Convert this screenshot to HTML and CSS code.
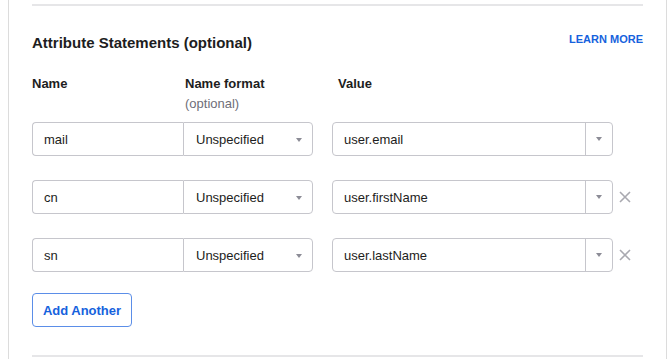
FILE: index.html
```html
<!DOCTYPE html>
<html lang="en">
<head>
  <meta charset="UTF-8" />
  <title>Attribute Statements</title>
  <meta name="viewport" content="width=device-width, initial-scale=1.0" />
  <link rel="stylesheet" href="styles.css">
</head>
<body>
  <div class="panel">
    <div class="divider"></div>

    <!-- Section header -->
    <div class="section-head">
      <h2>Attribute Statements (optional)</h2>
      <a class="learn-more" href="#">LEARN MORE</a>
    </div>

    <!-- Column labels -->
    <div class="row labels">
      <div class="col-name">Name</div>
      <div class="col-format">Name format<span class="hint">(optional)</span></div>
      <div class="col-value">Value</div>
    </div>

    <!-- Attribute rows -->
    <div class="rows">
      <div class="row">
        <div class="pair">
          <input class="name-input" type="text" value="mail" />
          <div class="select">Unspecified<span class="caret"></span></div>
        </div>
        <div class="combo">
          <span class="combo-text">user.email</span>
          <span class="combo-btn"><span class="caret"></span></span>
        </div>
      </div>

      <div class="row">
        <div class="pair">
          <input class="name-input" type="text" value="cn" />
          <div class="select">Unspecified<span class="caret"></span></div>
        </div>
        <div class="combo">
          <span class="combo-text">user.firstName</span>
          <span class="combo-btn"><span class="caret"></span></span>
        </div>
        <button class="remove" title="Remove">
          <svg width="12" height="12" viewBox="0 0 12 12"><path d="M1 1L11 11M11 1L1 11" stroke="#a9a9b0" stroke-width="1.6" fill="none"/></svg>
        </button>
      </div>

      <div class="row">
        <div class="pair">
          <input class="name-input" type="text" value="sn" />
          <div class="select">Unspecified<span class="caret"></span></div>
        </div>
        <div class="combo">
          <span class="combo-text">user.lastName</span>
          <span class="combo-btn"><span class="caret"></span></span>
        </div>
        <button class="remove" title="Remove">
          <svg width="12" height="12" viewBox="0 0 12 12"><path d="M1 1L11 11M11 1L1 11" stroke="#a9a9b0" stroke-width="1.6" fill="none"/></svg>
        </button>
      </div>
    </div>

    <button class="btn-add">Add Another</button>

    <div class="divider bottom"></div>
  </div>
</body>
</html>
```

FILE: styles.css
```css
* {
  box-sizing: border-box;
}

body {
  margin: 0;
  font-family: 'Liberation Sans', Arial, sans-serif;
  color: #1d1d21;
  background: #fff;
}

.panel {
  margin-left: 8px;
  width: 659px;
  height: 359px;
  border-left: 1px solid #dcdcdc;
  border-right: 1px solid #dcdcdc;
  padding: 4px 23px 0;
  overflow: hidden;
}

.divider {
  height: 2px;
  background: #e6e6e8;
}

.divider.bottom {
  margin-top: 28px;
}

.section-head {
  display: flex;
  justify-content: space-between;
  align-items: flex-start;
  margin-top: 27px;
}

h2 {
  margin: 0;
  font-size: 15px;
  line-height: 20px;
  font-weight: bold;
}

.learn-more {
  margin-top: -1px;
  font-size: 11px;
  line-height: 14px;
  font-weight: bold;
  color: #1662dd;
  text-decoration: none;
}

.row {
  display: flex;
  align-items: center;
}

.labels {
  align-items: flex-start;
  margin-top: 22px;
  font-size: 13px;
  line-height: 18px;
  font-weight: bold;
}

.col-name {
  width: 153px;
}

.col-format {
  width: 153px;
}

.hint {
  display: block;
  margin-top: 2px;
  font-weight: normal;
  color: #6e6e78;
}

.rows {
  display: flex;
  flex-direction: column;
  gap: 24px;
  margin-top: 9px;
}

.pair {
  display: flex;
  width: 281px;
  height: 34px;
}

.name-input {
  width: 151px;
  height: 34px;
  margin: 0;
  padding: 0 11px;
  border: 1px solid #c6c6cc;
  border-right: none;
  border-radius: 4px 0 0 4px;
  font-family: inherit;
  font-size: 13px;
  color: #1d1d21;
  outline: none;
}

.select {
  position: relative;
  flex: 1;
  display: flex;
  align-items: center;
  padding-left: 12px;
  border: 1px solid #c6c6cc;
  border-radius: 0 4px 4px 0;
  font-size: 13px;
}

.caret {
  width: 0;
  height: 0;
  border-left: 3px solid transparent;
  border-right: 3px solid transparent;
  border-top: 4px solid #8c8c96;
}

.select .caret {
  position: absolute;
  right: 10px;
  top: 15px;
}

.combo {
  display: flex;
  width: 281px;
  height: 34px;
  margin-left: 19px;
  border: 1px solid #c6c6cc;
  border-radius: 4px;
  font-size: 13px;
}

.combo-text {
  flex: 1;
  display: flex;
  align-items: center;
  padding-left: 11px;
}

.combo-btn {
  width: 27px;
  display: flex;
  align-items: center;
  justify-content: center;
  border-left: 1px solid #c6c6cc;
}

.remove {
  margin-left: 6px;
  padding: 0;
  border: none;
  background: none;
  display: flex;
  cursor: pointer;
}

.btn-add {
  margin-top: 21px;
  width: 100px;
  height: 34px;
  padding: 0;
  border: 1px solid #5b8ee8;
  border-radius: 4px;
  background: #fff;
  color: #1662dd;
  font-family: inherit;
  font-size: 13px;
  font-weight: bold;
  cursor: pointer;
}
```
